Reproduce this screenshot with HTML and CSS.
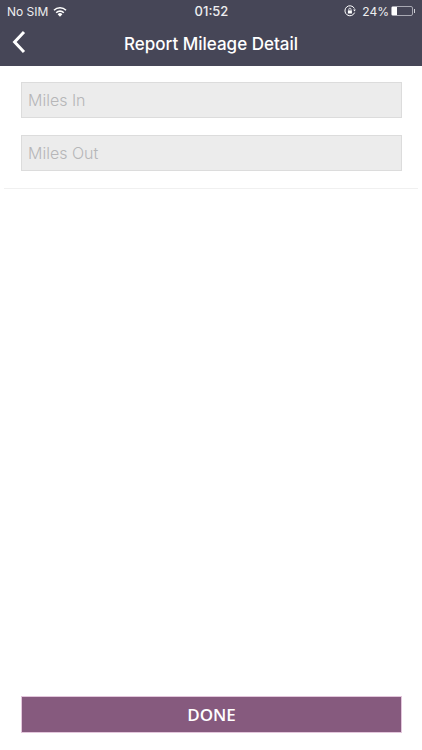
FILE: index.html
```html
<!DOCTYPE html>
<html lang="en">
<head>
    <meta charset="UTF-8">
    <title>Report Mileage Detail</title>
    <link rel="stylesheet" href="styles.css">
</head>
<body>
    <div class="screen">
        <div class="header">
            <div class="status-bar">
                <div class="status-left">
                    <span>No SIM</span>
                    <svg class="wifi" width="14" height="11" viewBox="0 0 14 11">
                        <path d="M7 10.8 4.6 8.2a3.3 3.3 0 0 1 4.8 0z" fill="#fff"/>
                        <path d="M3.2 6.7a5.3 5.3 0 0 1 7.6 0M1 4.3a8.4 8.4 0 0 1 12 0" fill="none" stroke="#fff" stroke-width="1.6"/>
                    </svg>
                </div>
                <div class="status-time">01:52</div>
                <div class="status-right">
                    <svg class="lock" width="12" height="12" viewBox="0 0 12 12">
                        <path d="M10.6 7.6A5 5 0 1 1 10.4 3.5" fill="none" stroke="#fff" stroke-width="1"/>
                        <path d="M9.2 4.6h2.6L10.5 6.4z" fill="#fff"/>
                        <rect x="3.9" y="5.4" width="4" height="3.1" fill="#fff"/>
                        <path d="M4.8 5.4V4.3a1.1 1.1 0 0 1 2.2 0v1.1" fill="none" stroke="#fff" stroke-width=".8"/>
                    </svg>
                    <span>24%</span>
                    <div class="battery">
                        <div class="battery-level" style="width: 24%"></div>
                    </div>
                    <div class="battery-tip"></div>
                </div>
            </div>
            <div class="nav-bar">
                <svg class="back" width="14" height="24" viewBox="0 0 14 24">
                    <path d="M12 2 2.6 12l9.4 10" fill="none" stroke="#fff" stroke-width="3"/>
                </svg>
                <h1>Report Mileage Detail</h1>
            </div>
        </div>

        <div class="form">
            <input class="field" type="text" placeholder="Miles In">
            <input class="field" type="text" placeholder="Miles Out">
        </div>
        <div class="divider"></div>

        <div class="footer">
            <button class="done-btn">DONE</button>
        </div>
    </div>
</body>
</html>
```

FILE: styles.css
```css
* {
    margin: 0;
    padding: 0;
    box-sizing: border-box;
}

body {
    font-family: "Liberation Sans", Arial, sans-serif;
    background: white;
}

.screen {
    width: 422px;
    height: 750px;
    display: flex;
    flex-direction: column;
    overflow: hidden;
}

.header {
    height: 66px;
    background: #464657;
    color: white;
}

.status-bar {
    height: 22px;
    padding: 0 7px 0 7px;
    display: grid;
    grid-template-columns: 1fr auto 1fr;
    align-items: center;
    font-family: Inter, sans-serif;
    font-size: 12px;
    color: #eeeef0;
}

.status-left {
    display: flex;
    align-items: center;
    gap: 5px;
}

.status-time {
    font-size: 13px;
    font-weight: 500;
    padding-left: 1px;
}

.status-right {
    display: flex;
    align-items: center;
    justify-content: flex-end;
}

.lock {
    margin-right: 6px;
}

.battery {
    width: 22px;
    height: 10px;
    margin-left: 2px;
    border: 1px solid #a9a9b3;
    border-radius: 2px;
}

.battery-level {
    height: 100%;
    background: white;
}

.battery-tip {
    width: 1px;
    height: 4px;
    margin-left: 1px;
    background: #d0d0d6;
}

.nav-bar {
    height: 44px;
    position: relative;
    display: flex;
    align-items: center;
    justify-content: center;
}

.back {
    position: absolute;
    left: 12px;
    top: 8px;
}

.nav-bar h1 {
    font-family: Inter, sans-serif;
    font-size: 17px;
    font-weight: 500;
}

.form {
    padding: 16px 20px 17px 21px;
    display: flex;
    flex-direction: column;
    gap: 17px;
}

.field {
    width: 100%;
    height: 36px;
    padding: 0 6px;
    background: #ececec;
    border: 1px solid #dcdcdc;
    font-family: Inter, sans-serif;
    font-size: 16px;
    font-weight: 300;
    outline: none;
}

.field::placeholder {
    color: #b6b6b8;
}

.divider {
    height: 1px;
    margin: 0 4px;
    background: #f0f0f0;
}

.footer {
    margin-top: auto;
    padding: 0 20px 17px 21px;
}

.done-btn {
    width: 100%;
    height: 37px;
    background: #865a7e;
    border: 1px solid #e3c6dc;
    color: white;
    font-family: "Open Sans", sans-serif;
    font-size: 17px;
    font-weight: 600;
}
```
